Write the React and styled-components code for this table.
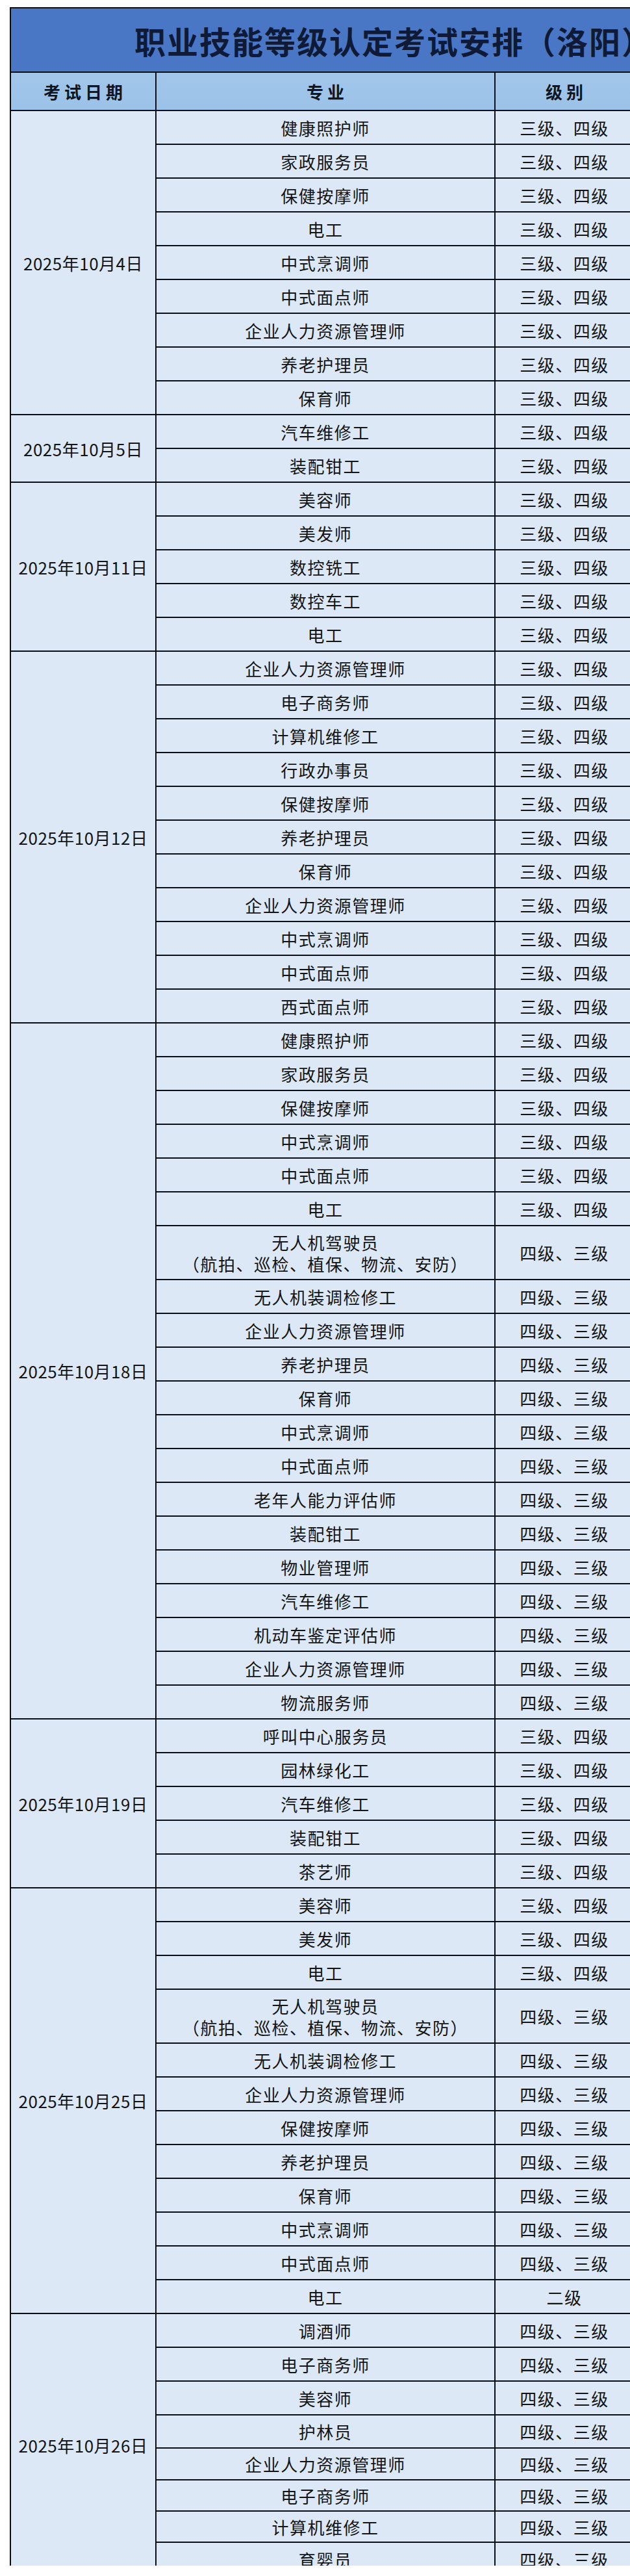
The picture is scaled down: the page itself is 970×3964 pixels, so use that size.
import React from "react";
import styled, { createGlobalStyle } from "styled-components";

const GlobalStyle = createGlobalStyle`
  html, body {
    margin: 0;
    padding: 0;
    background: #ffffff;
  }
  body {
    font-family: "Noto Sans CJK SC", "Noto Sans", sans-serif;
    color: #141414;
  }
`;

const A = "三级、四级";
const B = "四级、三级";
const DRONE = "（航拍、巡检、植保、物流、安防）";

const schedule = [
  {
    date: "2025年10月4日",
    rows: [
      { name: "健康照护师", level: A },
      { name: "家政服务员", level: A },
      { name: "保健按摩师", level: A },
      { name: "电工", level: A },
      { name: "中式烹调师", level: A },
      { name: "中式面点师", level: A },
      { name: "企业人力资源管理师", level: A },
      { name: "养老护理员", level: A },
      { name: "保育师", level: A },
    ],
  },
  {
    date: "2025年10月5日",
    rows: [
      { name: "汽车维修工", level: A },
      { name: "装配钳工", level: A },
    ],
  },
  {
    date: "2025年10月11日",
    rows: [
      { name: "美容师", level: A },
      { name: "美发师", level: A },
      { name: "数控铣工", level: A },
      { name: "数控车工", level: A },
      { name: "电工", level: A },
    ],
  },
  {
    date: "2025年10月12日",
    rows: [
      { name: "企业人力资源管理师", level: A },
      { name: "电子商务师", level: A },
      { name: "计算机维修工", level: A },
      { name: "行政办事员", level: A },
      { name: "保健按摩师", level: A },
      { name: "养老护理员", level: A },
      { name: "保育师", level: A },
      { name: "企业人力资源管理师", level: A },
      { name: "中式烹调师", level: A },
      { name: "中式面点师", level: A },
      { name: "西式面点师", level: A },
    ],
  },
  {
    date: "2025年10月18日",
    rows: [
      { name: "健康照护师", level: A },
      { name: "家政服务员", level: A },
      { name: "保健按摩师", level: A },
      { name: "中式烹调师", level: A },
      { name: "中式面点师", level: A },
      { name: "电工", level: A },
      { name: "无人机驾驶员", sub: DRONE, level: B },
      { name: "无人机装调检修工", level: B },
      { name: "企业人力资源管理师", level: B },
      { name: "养老护理员", level: B },
      { name: "保育师", level: B },
      { name: "中式烹调师", level: B },
      { name: "中式面点师", level: B },
      { name: "老年人能力评估师", level: B },
      { name: "装配钳工", level: B },
      { name: "物业管理师", level: B },
      { name: "汽车维修工", level: B },
      { name: "机动车鉴定评估师", level: B },
      { name: "企业人力资源管理师", level: B },
      { name: "物流服务师", level: B },
    ],
  },
  {
    date: "2025年10月19日",
    rows: [
      { name: "呼叫中心服务员", level: A },
      { name: "园林绿化工", level: A },
      { name: "汽车维修工", level: A },
      { name: "装配钳工", level: A },
      { name: "茶艺师", level: A },
    ],
  },
  {
    date: "2025年10月25日",
    rows: [
      { name: "美容师", level: A },
      { name: "美发师", level: A },
      { name: "电工", level: A },
      { name: "无人机驾驶员", sub: DRONE, level: B },
      { name: "无人机装调检修工", level: B },
      { name: "企业人力资源管理师", level: B },
      { name: "保健按摩师", level: B },
      { name: "养老护理员", level: B },
      { name: "保育师", level: B },
      { name: "中式烹调师", level: B },
      { name: "中式面点师", level: B },
      { name: "电工", level: "二级" },
    ],
  },
  {
    date: "2025年10月26日",
    rows: [
      { name: "调酒师", level: B },
      { name: "电子商务师", level: B },
      { name: "美容师", level: B },
      { name: "护林员", level: B, h: 51 },
      { name: "企业人力资源管理师", level: B, h: 49 },
      { name: "电子商务师", level: B, h: 48 },
      { name: "计算机维修工", level: B, h: 48 },
      { name: "育婴员", level: B },
    ],
  },
];

const rowHeight = (row) => row.h || (row.sub ? 83 : 52);

export default function App() {
  return (
    <>
      <GlobalStyle />
      <Frame>
        <Sheet>
          <Title>职业技能等级认定考试安排（洛阳）</Title>
          <HeadRow>
            <HeadCell>考试日期</HeadCell>
            <HeadCell>专业</HeadCell>
            <HeadCell $last>级别</HeadCell>
          </HeadRow>
          {schedule.map((group) => (
            <Group key={group.date}>
              <DateCell>{group.date}</DateCell>
              <Rows>
                {group.rows.map((row, i) => (
                  <Row key={i} $h={rowHeight(row)}>
                    <JobCell>
                      <span>{row.name}</span>
                      {row.sub && <span>{row.sub}</span>}
                    </JobCell>
                    <LevelCell>{row.level}</LevelCell>
                  </Row>
                ))}
              </Rows>
            </Group>
          ))}
        </Sheet>
      </Frame>
    </>
  );
}

const LINE = "#0a0e16";

const Frame = styled.div`
  width: 970px;
  height: 3948px;
  overflow: hidden;
  background: #ffffff;
`;

const Sheet = styled.div`
  margin: 11px 0 0 15px;
  width: 1182px;
  border-top: 2px solid ${LINE};
  border-left: 2px solid ${LINE};
`;

const Title = styled.div`
  box-sizing: border-box;
  height: 99px;
  width: 1180px;
  display: flex;
  align-items: center;
  justify-content: center;
  background: #4a77c5;
  border-bottom: 2px solid ${LINE};
  font-size: 48px;
  font-weight: 700;
  letter-spacing: 2px;
  color: #0e1a36;
  white-space: nowrap;
`;

const HeadRow = styled.div`
  box-sizing: border-box;
  display: grid;
  grid-template-columns: 224px 522px 212px;
  height: 59px;
  background: linear-gradient(#a2c6ea, #9bc2e8);
  border-bottom: 2px solid ${LINE};
`;

const HeadCell = styled.div`
  display: flex;
  align-items: center;
  justify-content: center;
  border-right: ${(p) => (p.$last ? "none" : `2px solid ${LINE}`)};
  font-size: 26px;
  font-weight: 700;
  letter-spacing: 6px;
  padding-left: 6px;
  color: #101522;
`;

const Group = styled.div`
  display: flex;
  width: 958px;
  background: #dce8f5;
`;

const DateCell = styled.div`
  box-sizing: border-box;
  width: 224px;
  flex: none;
  display: flex;
  align-items: center;
  justify-content: center;
  border-right: 2px solid ${LINE};
  border-bottom: 2px solid ${LINE};
  font-size: 26px;
  letter-spacing: 0.5px;
  white-space: nowrap;
`;

const Rows = styled.div`
  display: flex;
  flex-direction: column;
  flex: 1;
`;

const Row = styled.div`
  box-sizing: border-box;
  display: grid;
  grid-template-columns: 522px 212px;
  height: ${(p) => p.$h}px;
  flex: none;
  border-bottom: 2px solid ${LINE};
`;

const JobCell = styled.div`
  display: flex;
  flex-direction: column;
  align-items: center;
  justify-content: center;
  border-right: 2px solid ${LINE};
  font-size: 26px;
  line-height: 33px;
  letter-spacing: 1.5px;
  white-space: nowrap;
`;

const LevelCell = styled.div`
  display: flex;
  align-items: center;
  justify-content: center;
  font-size: 26px;
  letter-spacing: 1.5px;
  white-space: nowrap;
`;
